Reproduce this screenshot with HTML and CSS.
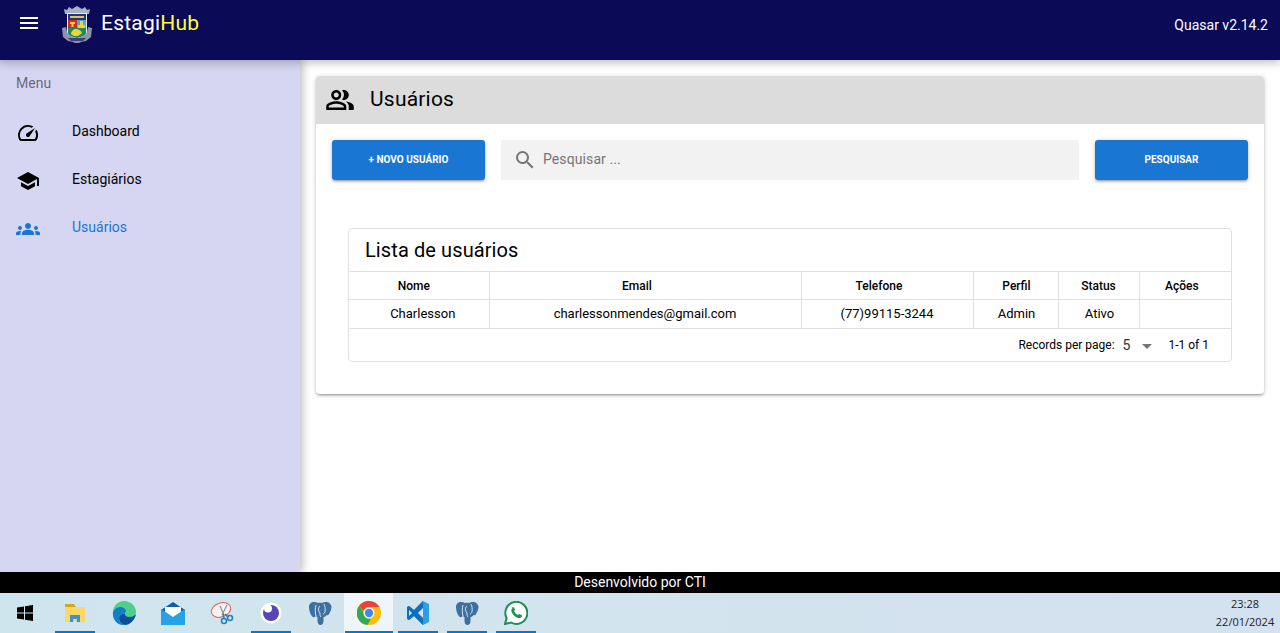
FILE: index.html
```html
<!DOCTYPE html>
<html lang="pt-BR">
<head>
<meta charset="utf-8">
<title>EstagiHub</title>
<link rel="stylesheet" href="styles.css">
</head>
<body>
<div class="screen">
  <header class="topbar">
    <div class="brand">
      <svg class="burger" viewBox="0 0 24 24"><path d="M3 18h18v-2H3v2zm0-5h18v-2H3v2zm0-7v2h18V6H3z"/></svg>
      <svg class="crest" viewBox="0 0 30 38">
        <path d="M3 8L2 3l3 1 2-3 3 2 5-3 5 3 3-2 2 3 3-1-1 5z" fill="#a7b3c4"/>
        <path d="M5 7h20v20c0 3-5 5-10 6-5-1-10-3-10-6z" fill="#e8ecf2"/>
        <path d="M6 8h18v6H6z" fill="#26337f"/>
        <path d="M8 10h14v2H8z" fill="#d9c94c"/>
        <path d="M6 14h9v8H6z" fill="#d9281e"/>
        <path d="M8 16h5v2h-1.500v3h-2v-3H8z" fill="#efd33a"/>
        <path d="M15 14h9v8h-9z" fill="#49a8d8"/>
        <path d="M18 15h3v4h2v3h-7v-3h2z" fill="#efd33a"/>
        <path d="M6 22h18v5c0 2-4 4-9 5-5-1-9-3-9-5z" fill="#1f8a5b"/>
        <path d="M9 28c0-3 3-5 5-5s5 1 6 4l-4 3h-4z" fill="#efd33a"/>
        <path d="M0 22l4-1 1 5c1 3 5 5 10 6 5-1 9-3 10-6l1-5 4 1-1 9-5 4-5 1-2 1h-4l-2-1-5-1-5-4z" fill="#8e93ad"/>
        <path d="M6 32h18l-3 3H9z" fill="#3c407c"/>
      </svg>
      <span class="brand-name">Estagi<span class="brand-accent">Hub</span></span>
    </div>
    <span class="version">Quasar v2.14.2</span>
  </header>

  <div class="middle">
    <aside class="sidebar">
      <div class="menu-label">Menu</div>
      <nav class="menu">
        <a class="menu-item">
          <svg class="menu-icon" viewBox="0 0 24 24"><path d="M20.38 8.57l-1.23 1.85a8 8 0 0 1-.22 7.58H5.07A8 8 0 0 1 15.58 6.85l1.85-1.23A10 10 0 0 0 3.35 19a2 2 0 0 0 1.72 1h13.85a2 2 0 0 0 1.74-1 10 10 0 0 0-.27-10.44z"/><path d="M10.59 15.41a2 2 0 0 0 2.83 0l5.66-8.49-8.49 5.66a2 2 0 0 0 0 2.83z"/></svg>
          <span>Dashboard</span>
        </a>
        <a class="menu-item">
          <svg class="menu-icon" viewBox="0 0 24 24"><path d="M5 13.18v4L12 21l7-3.82v-4L12 17l-7-3.82zM12 3L1 9l11 6 9-4.91V17h2V9L12 3z"/></svg>
          <span>Estagiários</span>
        </a>
        <a class="menu-item active">
          <svg class="menu-icon" viewBox="0 0 24 24"><path d="M12 12.75c1.63 0 3.07.39 4.24.9 1.08.48 1.76 1.56 1.76 2.73V18H6v-1.61c0-1.18.68-2.26 1.76-2.73 1.17-.52 2.61-.91 4.24-.91zM4 13c1.1 0 2-.9 2-2s-.9-2-2-2-2 .9-2 2 .9 2 2 2zm1.13 1.1c-.37-.06-.74-.1-1.13-.1-.99 0-1.93.21-2.78.58A2.01 2.01 0 0 0 0 16.43V18h4.5v-1.61c0-.83.23-1.61.63-2.29zM20 13c1.1 0 2-.9 2-2s-.9-2-2-2-2 .9-2 2 .9 2 2 2zm4 3.43c0-.81-.48-1.53-1.22-1.85A6.95 6.95 0 0 0 20 14c-.39 0-.76.04-1.13.1.4.68.63 1.46.63 2.29V18H24v-1.57zM12 6c1.66 0 3 1.34 3 3s-1.34 3-3 3-3-1.34-3-3 1.34-3 3-3z"/></svg>
          <span>Usuários</span>
        </a>
      </nav>
    </aside>

    <main class="content">
      <section class="card">
        <div class="card-head">
          <svg class="head-icon" viewBox="0 0 24 24"><path d="M16.67 13.13C18.04 14.06 19 15.32 19 17v3h4v-3c0-2.18-3.57-3.47-6.33-3.87zM15 12c2.21 0 4-1.79 4-4s-1.79-4-4-4c-.47 0-.91.1-1.33.24a5.98 5.98 0 0 1 0 7.52c.42.14.86.24 1.33.24zM9 12c2.21 0 4-1.79 4-4s-1.79-4-4-4-4 1.79-4 4 1.79 4 4 4zm0-6c1.1 0 2 .9 2 2s-.9 2-2 2-2-.9-2-2 .9-2 2-2zM9 13c-2.67 0-8 1.34-8 4v3h16v-3c0-2.66-5.33-4-8-4zm6 5H3v-.99C3.2 16.29 6.3 15 9 15s5.8 1.29 6 2v1z"/></svg>
          <h1 class="card-title">Usuários</h1>
        </div>
        <div class="card-body">
          <div class="toolbar">
            <button class="btn">+ Novo Usuário</button>
            <div class="search">
              <svg class="search-icon" viewBox="0 0 24 24"><path d="M15.5 14h-.79l-.28-.27A6.47 6.47 0 0 0 16 9.5 6.5 6.5 0 1 0 9.5 16c1.61 0 3.09-.59 4.23-1.57l.27.28v.79l5 4.99L20.49 19l-4.99-5zm-6 0C7.01 14 5 11.99 5 9.5S7.01 5 9.5 5 14 7.01 14 9.5 11.99 14 9.5 14z"/></svg>
              <span class="search-text">Pesquisar ...</span>
            </div>
            <button class="btn">Pesquisar</button>
          </div>

          <div class="table-card">
            <div class="table-title">Lista de usuários</div>
            <table class="grid">
              <colgroup>
                <col class="col-nome"><col class="col-email"><col class="col-tel"><col class="col-perfil"><col class="col-status"><col class="col-acoes">
              </colgroup>
              <thead>
                <tr><th class="th-nome">Nome</th><th class="th-wide">Email</th><th class="th-wide">Telefone</th><th class="nudge">Perfil</th><th>Status</th><th class="th-acoes">Ações</th></tr>
              </thead>
              <tbody>
                <tr><td class="td-nome">Charlesson</td><td>charlessonmendes@gmail.com</td><td>(77)99115-3244</td><td class="nudge">Admin</td><td class="nudge">Ativo</td><td></td></tr>
              </tbody>
            </table>
            <div class="pager">
              <span class="pager-label">Records per page:</span>
              <span class="pager-size">5</span>
              <span class="pager-caret"></span>
              <span class="pager-range">1-1 of 1</span>
            </div>
          </div>
        </div>
      </section>
    </main>
  </div>

  <footer class="footer">Desenvolvido por CTI</footer>

  <div class="taskbar">
    <div class="task-icons">
      <div class="task task-start">
        <svg class="ico" viewBox="0 0 24 24"><path d="M4 6.500l7-1v6H4zM12 5.300l8-1.300v7.500h-8zM4 12.500h7v6l-7-1zM12 12.500h8V20l-8-1.200z" fill="#000"/></svg>
      </div>
      <div class="task open">
        <svg class="ico" viewBox="0 0 24 24"><path d="M2 3h9l2 3H2z" fill="#d9a514"/><path d="M2 6h20v15H2z" fill="#fcd667"/><path d="M7 14h10v7h-3v-3h-4v3H7z" fill="#3f8fd8"/></svg>
      </div>
      <div class="task">
        <svg class="ico" viewBox="0 0 24 24"><path d="M12 0c7 0 12 5 12 11 0 3-3 5-6 5-3 0-5-1-5-3 0-1 1-1 1-3 0-2-2-4-5-4C5 6 2 9 1 11 1 5 6 0 12 0z" fill="#4fd08a"/><path d="M1 11c1-3 4-5 8-5 3 0 5 2 5 4 0 1-1 2-1 3-3-1-6 1-6 4 0 3 2 6 6 7C6 25 0 19 1 11z" fill="#0f7fc8"/><path d="M13 13c0 2 2 3 5 3 2 0 4-1 6-3-1 6-6 11-11 11-4-1-6-4-6-7 0-3 3-5 6-4z" fill="#0b4f96"/></svg>
      </div>
      <div class="task">
        <svg class="ico" viewBox="0 0 24 24"><path d="M0 9l12-8 12 8v15H0z" fill="#0f5ea8"/><path d="M4 6h16v8l-8 5-8-5z" fill="#fff"/><path d="M0 8l12 8 12-8v16H0z" fill="#26a2e6"/></svg>
      </div>
      <div class="task">
        <svg class="ico" viewBox="0 0 24 24"><ellipse cx="11" cy="9" rx="10" ry="7" fill="#f3f3f3" stroke="#e0605a" stroke-width="1" transform="rotate(-20 11 9)"/><path d="M10 5l4 9M17 4l-5 10" stroke="#8a8f96" stroke-width="1.200" fill="none"/><circle cx="14" cy="20" r="2.500" fill="none" stroke="#2a7fc0" stroke-width="1.600"/><circle cx="20" cy="17" r="2.500" fill="none" stroke="#2a7fc0" stroke-width="1.600"/><path d="M13 13l1 4M15 13l3 3" stroke="#2a7fc0" stroke-width="1.600"/></svg>
      </div>
      <div class="task open">
        <svg class="ico" viewBox="0 0 24 24"><circle cx="12" cy="12" r="10.500" fill="#fff"/><circle cx="12" cy="12" r="8" fill="#5545b8"/><circle cx="9" cy="7.500" r="4" fill="#fff"/></svg>
      </div>
      <div class="task">
        <svg class="ico" viewBox="0 0 24 24"><path d="M6 1C3 1 1 3 1 6c0 4 2 9 4 10 1 .5 2 0 3-1 1 1 1.500 1 1.500 1V20c0 2.500 1.500 4 3 4s3-1.500 3-4v-4c1 0 2-.5 3-2 1 .5 2 .5 2.500-1 1.500-2 2.500-5 2.500-7.500C23 3 21 1 18 1c-1.500 0-3 .5-4 1-1-.5-3-.5-4 0C9 1.500 7.500 1 6 1z" fill="#3f6f9e"/><path d="M8 4c-1 3-1 7 0 11M16 3c1 2 1.500 5 1 8-.5 1-1.500 2-2 2M12 5c-2 1-2 5 0 7 0 2 0 3 1 4" stroke="#e8f1f6" stroke-width=".9" fill="none"/></svg>
      </div>
      <div class="task current">
        <svg class="ico" viewBox="0 0 24 24"><circle cx="12" cy="12" r="12" fill="#fbbc04"/><path d="M12 0a12 12 0 0 1 10.400 6H12a6 6 0 0 0-5.700 4.100L2.400 4.500A12 12 0 0 1 12 0z" fill="#ea4335"/><path d="M2.400 4.500l5.200 9A6 6 0 0 0 14 17.700L10.500 24A12 12 0 0 1 2.400 4.500z" fill="#34a853"/><circle cx="12" cy="12" r="5.500" fill="#fff"/><circle cx="12" cy="12" r="4.200" fill="#4285f4"/></svg>
      </div>
      <div class="task open">
        <svg class="ico" viewBox="0 0 24 24"><path d="M17 0l6 3v18l-6 3-9-9-5 4-2-1V6l2-1 5 4z" fill="#2a9fe8"/><path d="M17 0v24L8 15l-5 4-2-1V6l2-1 5 4z" fill="#0f6fb8"/><path d="M17 7l-5 5 5 5z" fill="#d2e6f0"/><path d="M3 9l3 3-3 3z" fill="#d2e6f0"/></svg>
      </div>
      <div class="task open">
        <svg class="ico" viewBox="0 0 24 24"><path d="M6 1C3 1 1 3 1 6c0 4 2 9 4 10 1 .5 2 0 3-1 1 1 1.500 1 1.500 1V20c0 2.500 1.500 4 3 4s3-1.500 3-4v-4c1 0 2-.5 3-2 1 .5 2 .5 2.500-1 1.500-2 2.500-5 2.500-7.500C23 3 21 1 18 1c-1.500 0-3 .5-4 1-1-.5-3-.5-4 0C9 1.500 7.500 1 6 1z" fill="#3f6f9e"/><path d="M8 4c-1 3-1 7 0 11M16 3c1 2 1.500 5 1 8-.5 1-1.500 2-2 2M12 5c-2 1-2 5 0 7 0 2 0 3 1 4" stroke="#e8f1f6" stroke-width=".9" fill="none"/></svg>
      </div>
      <div class="task open">
        <svg class="ico" viewBox="0 0 24 24"><path d="M1 23l1.600-6A11 11 0 1 1 7 21.500z" fill="#fff" stroke="#1f8f55" stroke-width="2"/><path d="M8.500 7c-1 1-1.500 2-1 3.500 1 3 3.500 5.500 6.500 6.500 1.500.5 2.500 0 3.500-1 .5-.5.5-1.500 0-2l-2-1c-.5 0-1 .5-1.500 1-2-1-3-2-4-4 .5-.5 1-1 1-1.500l-1-2c-.5-.5-1.500-.5-2.500 0z" fill="#1f8f55"/></svg>
      </div>
    </div>
    <div class="clock">
      <span>23:28</span>
      <span>22/01/2024</span>
    </div>
  </div>
</div>
</body>
</html>
```
FILE: styles.css
```css
* { box-sizing: border-box; }
html, body { margin: 0; padding: 0; }
body {
  font-family: Roboto, "Liberation Sans", sans-serif;
  font-size: 14px;
  color: #000;
  background: #fff;
  overflow: hidden;
}
.screen {
  width: 1280px;
  height: 633px;
  display: flex;
  flex-direction: column;
}

/* Top bar */
.topbar {
  height: 60px;
  flex: none;
  background: #0a0a57;
  color: #fff;
  display: flex;
  justify-content: space-between;
  padding: 0 12px 14px 17px;
  align-items: center;
  position: relative;
  z-index: 2;
  box-shadow: 0 0 10px 2px rgba(0,0,0,.2), 0 0 10px rgba(0,0,0,.14);
}
.brand { display: flex; align-items: center; }
.burger { width: 24px; height: 24px; fill: #fff; }
.crest { width: 30px; height: 38px; margin: 4px 0 0 21px; }
.brand-name { font-size: 21px; font-weight: 400; margin-left: 9px; letter-spacing: .21px; }
.brand-accent { color: #ffff3b; }
.version { font-size: 14px; font-weight: 400; padding-top: 3px; }

/* Middle */
.middle { flex: 1; display: flex; min-height: 0; }
.sidebar {
  width: 300px;
  flex: none;
  background: #d6d6f2;
  box-shadow: 0 0 10px 2px rgba(0,0,0,.2), 0 0 10px rgba(0,0,0,.14);
  position: relative;
  z-index: 1;
}
.menu-label {
  height: 48px;
  padding: 16px 16px 0;
  line-height: 14px;
  font-size: 14px;
  color: rgba(0,0,0,.54);
}
.menu-item {
  height: 48px;
  display: flex;
  align-items: center;
  padding: 0 16px;
  font-size: 14px;
  color: #000;
}
.menu-item span { margin-left: 32px; margin-top: -2px; }
.menu-icon { width: 24px; height: 24px; fill: #000; margin-top: 2px; }
.menu-item.active { color: #1976d2; }
.menu-item.active .menu-icon { fill: #1976d2; }

/* Content */
.content { flex: 1; padding: 16px; min-width: 0; }
.card {
  height: 318px;
  border-radius: 4px;
  background: #fff;
  overflow: hidden;
  box-shadow: 0 1px 5px rgba(0,0,0,.2), 0 2px 2px rgba(0,0,0,.14), 0 3px 1px -2px rgba(0,0,0,.12);
}
.card-head {
  height: 48px;
  background: #dcdcdc;
  display: flex;
  align-items: center;
  padding: 0 0 1px 9px;
}
.head-icon { width: 30px; height: 30px; fill: #000; }
.card-title { margin: 0 0 2px 15px; font-size: 21px; font-weight: 400; letter-spacing: .21px; }
.card-body { padding: 16px; }
.toolbar { display: flex; gap: 16px; height: 40px; }
.btn {
  width: 153px;
  flex: none;
  border: 0;
  border-radius: 3px;
  background: #1976d2;
  color: #fff;
  font: 700 10px Roboto, sans-serif;
  text-transform: uppercase;
  padding: 0 0 2px;
  box-shadow: 0 1px 5px rgba(0,0,0,.2), 0 2px 2px rgba(0,0,0,.14), 0 3px 1px -2px rgba(0,0,0,.12);
}
.search {
  flex: 1;
  background: #f2f2f2;
  border-radius: 2px 2px 0 0;
  display: flex;
  align-items: center;
  padding-left: 12px;
}
.search-icon { width: 24px; height: 24px; fill: #757575; }
.search-text { margin: 0 0 2px 6px; color: #757575; font-size: 14px; letter-spacing: .1px; }

/* Table */
.table-card {
  margin: 48px 16px 0;
  border: 1px solid #e0e0e0;
  border-radius: 4px;
}
.table-title {
  height: 42px;
  padding-left: 16px;
  font-size: 20px;
  line-height: 43px;
  letter-spacing: .1px;
}
.grid {
  width: 882px;
  border-collapse: collapse;
  table-layout: fixed;
  font-size: 13px;
}
.col-nome { width: 140px; }
.col-email { width: 312px; }
.col-tel { width: 172px; }
.col-perfil { width: 85px; }
.col-status { width: 81px; }
.col-acoes { width: 92px; }
.grid th, .grid td {
  border: 1px solid #e0e0e0;
  text-align: center;
  padding: 0;
}
.grid tr > :first-child { border-left: 0; }
.grid tr > :last-child { border-right: 0; }
.grid th { height: 28px; font-size: 12px; font-weight: 500; }
.grid td { height: 29px; padding-bottom: 2px; }
.grid .th-nome { padding-right: 10px; }
.grid .th-wide { padding-right: 16px; }
.grid .th-acoes { padding-right: 7px; }
.grid .td-nome { padding-left: 8px; }
.grid .nudge { padding-left: 2px; }
.pager {
  height: 32px;
  display: flex;
  align-items: center;
  justify-content: flex-end;
  padding-right: 22px;
  font-size: 12px;
}
.pager-size { font-size: 14px; margin-left: 8px; color: #333; }
.pager-caret {
  width: 0;
  height: 0;
  border: 5px solid transparent;
  border-top-color: #757575;
  border-bottom: 0;
  margin-left: 12px;
  margin-top: 2px;
}
.pager-range { margin-left: 16px; }

/* Footer */
.footer {
  height: 21px;
  flex: none;
  background: #000;
  color: #fff;
  font-size: 14px;
  font-weight: 400;
  line-height: 21px;
  text-align: center;
  position: relative;
  z-index: 2;
}

/* Taskbar */
.taskbar {
  height: 40px;
  flex: none;
  background: linear-gradient(90deg, #cfe5ee, #d3e4ee 50%, #d4e1ee);
  display: flex;
  justify-content: space-between;
  font-family: "Open Sans", sans-serif;
}
.task-icons { display: flex; padding-left: 1px; }
.task {
  width: 49px;
  height: 40px;
  display: flex;
  align-items: center;
  justify-content: center;
  position: relative;
}
.task-start { margin-left: -1px; margin-right: 1px; }
.task.open::after, .task.current::after {
  content: "";
  position: absolute;
  bottom: 0;
  left: 5px;
  width: 40px;
  height: 2px;
  background: #0078d4;
}
.task.current { background: #eef6fa; }
.task.current::after { left: 1px; width: 48px; }
.ico { width: 24px; height: 24px; }
.clock {
  width: 70px;
  padding: 2px 0 0;
  display: flex;
  flex-direction: column;
  gap: 1px;
  align-items: center;
  font-size: 11px;
  line-height: 17px;
  color: #222;
}
```
